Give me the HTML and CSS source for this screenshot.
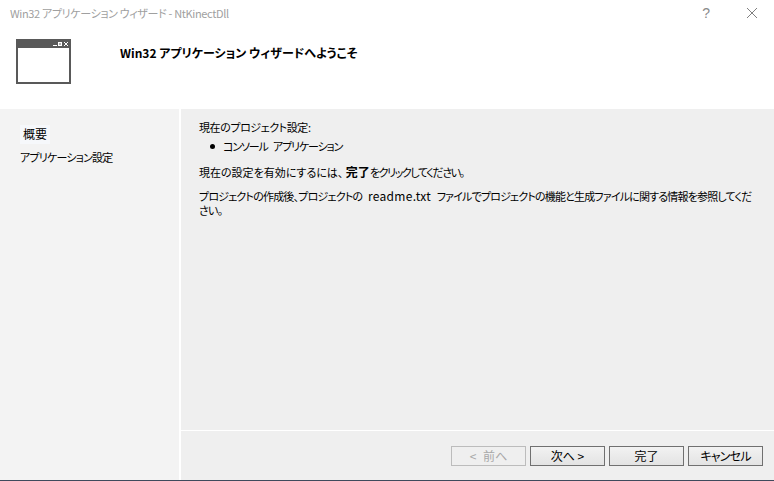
FILE: index.html
```html
<!DOCTYPE html>
<html lang="ja">
<head>
    <meta charset="UTF-8">
    <meta name="viewport" content="width=device-width, initial-scale=1.0">
    <title>Win32 アプリケーション ウィザード - NtKinectDll</title>
    <link rel="stylesheet" href="styles.css">
</head>
<body>
    <div class="dialog">
        <div class="titlebar">
            <span class="title">Win32 アプリケーション ウィザード - NtKinectDll</span>
            <span class="help">?</span>
            <svg class="close" viewBox="0 0 10 10">
                <path d="M0 0l10 10M10 0l-10 10"/>
            </svg>
        </div>

        <div class="header">
            <div class="wizard-icon">
                <div class="wizard-icon-bar">
                    <svg viewBox="0 0 15 4">
                        <path d="M0 3h4v1H0z"/>
                        <path d="M5 0h4v4H5z M6 1.5v1h2v-1z" fill-rule="evenodd"/>
                        <path d="M11 0h1v1h-1zM14 0h1v1h-1zM12 1h2v2h-2zM11 3h1v1h-1zM14 3h1v1h-1z"/>
                    </svg>
                </div>
            </div>
            <h1>Win32 アプリケーション ウィザードへようこそ</h1>
        </div>

        <div class="main">
            <div class="sidebar">
                <div class="nav-item active">概要</div>
                <div class="nav-item">アプリケーション設定</div>
            </div>
            <div class="content">
                <div class="content-body">
                    <p class="heading">現在のプロジェクト設定:</p>
                    <ul class="settings">
                        <li>コンソール アプリケーション</li>
                    </ul>
                    <p class="note">現在の設定を有効にするには、 <strong>完了</strong><span class="note-tail">をクリックしてください。</span></p>
                    <p class="note note-long">プロジェクトの作成後、プロジェクトの <span class="file-name">readme.txt</span> <span class="long-tail">ファイルでプロジェクトの機能と生成ファイルに関する情報を参照してくだ</span><br>さい。</p>
                </div>
                <div class="buttons">
                    <button class="btn" disabled>&lt; 前へ</button>
                    <button class="btn">次へ &gt;</button>
                    <button class="btn">完了</button>
                    <button class="btn btn-narrow">キャンセル</button>
                </div>
            </div>
        </div>
    </div>
</body>
</html>
```

FILE: styles.css
```css
* {
    margin: 0;
    padding: 0;
    box-sizing: border-box;
}

html, body {
    height: 100%;
}

body {
    font-family: "Noto Sans CJK JP", "Liberation Sans", sans-serif;
    font-size: 12px;
    font-feature-settings: "palt";
    color: #000;
    background: #fff;
    overflow: hidden;
}

.dialog {
    height: 481px;
    display: flex;
    flex-direction: column;
    border-bottom: 1px solid #3f4a5c;
}

.titlebar {
    height: 30px;
    flex: none;
    display: flex;
    align-items: center;
    padding: 0 17px 4px 10px;
    color: #a0a0a0;
}

.title {
    flex: 1;
    font-size: 11px;
    letter-spacing: -0.35px;
}

.help {
    margin-right: 37px;
    font-family: "Liberation Sans", sans-serif;
    font-size: 14px;
    color: #8a8a8a;
}

.close {
    width: 10px;
    height: 10px;
}

.close path {
    stroke: #808080;
    stroke-width: 1;
    fill: none;
}

.header {
    height: 79px;
    flex: none;
    display: flex;
    align-items: flex-start;
    padding: 9px 0 0 16px;
}

.wizard-icon {
    width: 55px;
    height: 45px;
    border: 2px solid #595959;
    background: #fff;
}

.wizard-icon-bar {
    height: 7px;
    background: #595959;
    display: flex;
    justify-content: flex-end;
    align-items: center;
    padding: 0 1px 1px 0;
}

.wizard-icon-bar svg {
    width: 15px;
    height: 4px;
    fill: #fff;
}

h1 {
    margin: 5px 0 0 49px;
    font-size: 12px;
    font-weight: 700;
    line-height: 18px;
}

.main {
    flex: 1;
    display: flex;
    gap: 2px;
    min-height: 0;
}

.sidebar {
    width: 179px;
    flex: none;
    background: #f3f3f3;
    padding: 16px 0 0 20px;
}

.nav-item {
    font-size: 11px;
    letter-spacing: -0.8px;
    line-height: 18px;
    margin-bottom: 4px;
}

.nav-item.active {
    width: 30px;
    height: 19px;
    padding-left: 3px;
    font-size: 12px;
    letter-spacing: 0;
    background: #f6f8fb;
}

.content {
    flex: 1;
    min-width: 0;
    display: flex;
    flex-direction: column;
    background: #efefef;
}

.content-body {
    flex: 1;
    padding: 11px 0 0 18px;
    font-size: 11px;
    line-height: 14px;
    border-bottom: 1px solid #fff;
    white-space: nowrap;
}

.heading {
    letter-spacing: -0.42px;
    margin-bottom: 5px;
}

.settings {
    list-style: none;
    letter-spacing: -1.15px;
    word-spacing: 4px;
    margin-bottom: 12px;
}

.settings li {
    position: relative;
    padding-left: 24px;
}

.settings li::before {
    content: "";
    position: absolute;
    left: 11px;
    top: 5px;
    width: 5px;
    height: 5px;
    border-radius: 50%;
    background: #000;
}

.note {
    margin-bottom: 10px;
}

.note strong {
    font-size: 12px;
    letter-spacing: 0;
}

.note-tail {
    letter-spacing: -1.4px;
}

.note-long {
    letter-spacing: -0.8px;
    word-spacing: 4px;
}

.file-name {
    font-size: 12px;
    letter-spacing: 0.3px;
}

.long-tail {
    letter-spacing: -0.82px;
}

.buttons {
    height: 49px;
    flex: none;
    display: flex;
    justify-content: flex-end;
    gap: 4px;
    padding: 15px 11px 0 0;
}

.btn {
    width: 75px;
    height: 20px;
    font-family: inherit;
    font-size: 12px;
    font-feature-settings: inherit;
    line-height: 16px;
    color: #000;
    border: 1px solid #707070;
    background: linear-gradient(#f2f2f2, #e3e3e3);
}

.btn-narrow {
    letter-spacing: -0.8px;
}

.btn:disabled {
    word-spacing: 4px;
    color: #a8a8a8;
    border-color: #bcbcbc;
    background: #efefef;
}
```
